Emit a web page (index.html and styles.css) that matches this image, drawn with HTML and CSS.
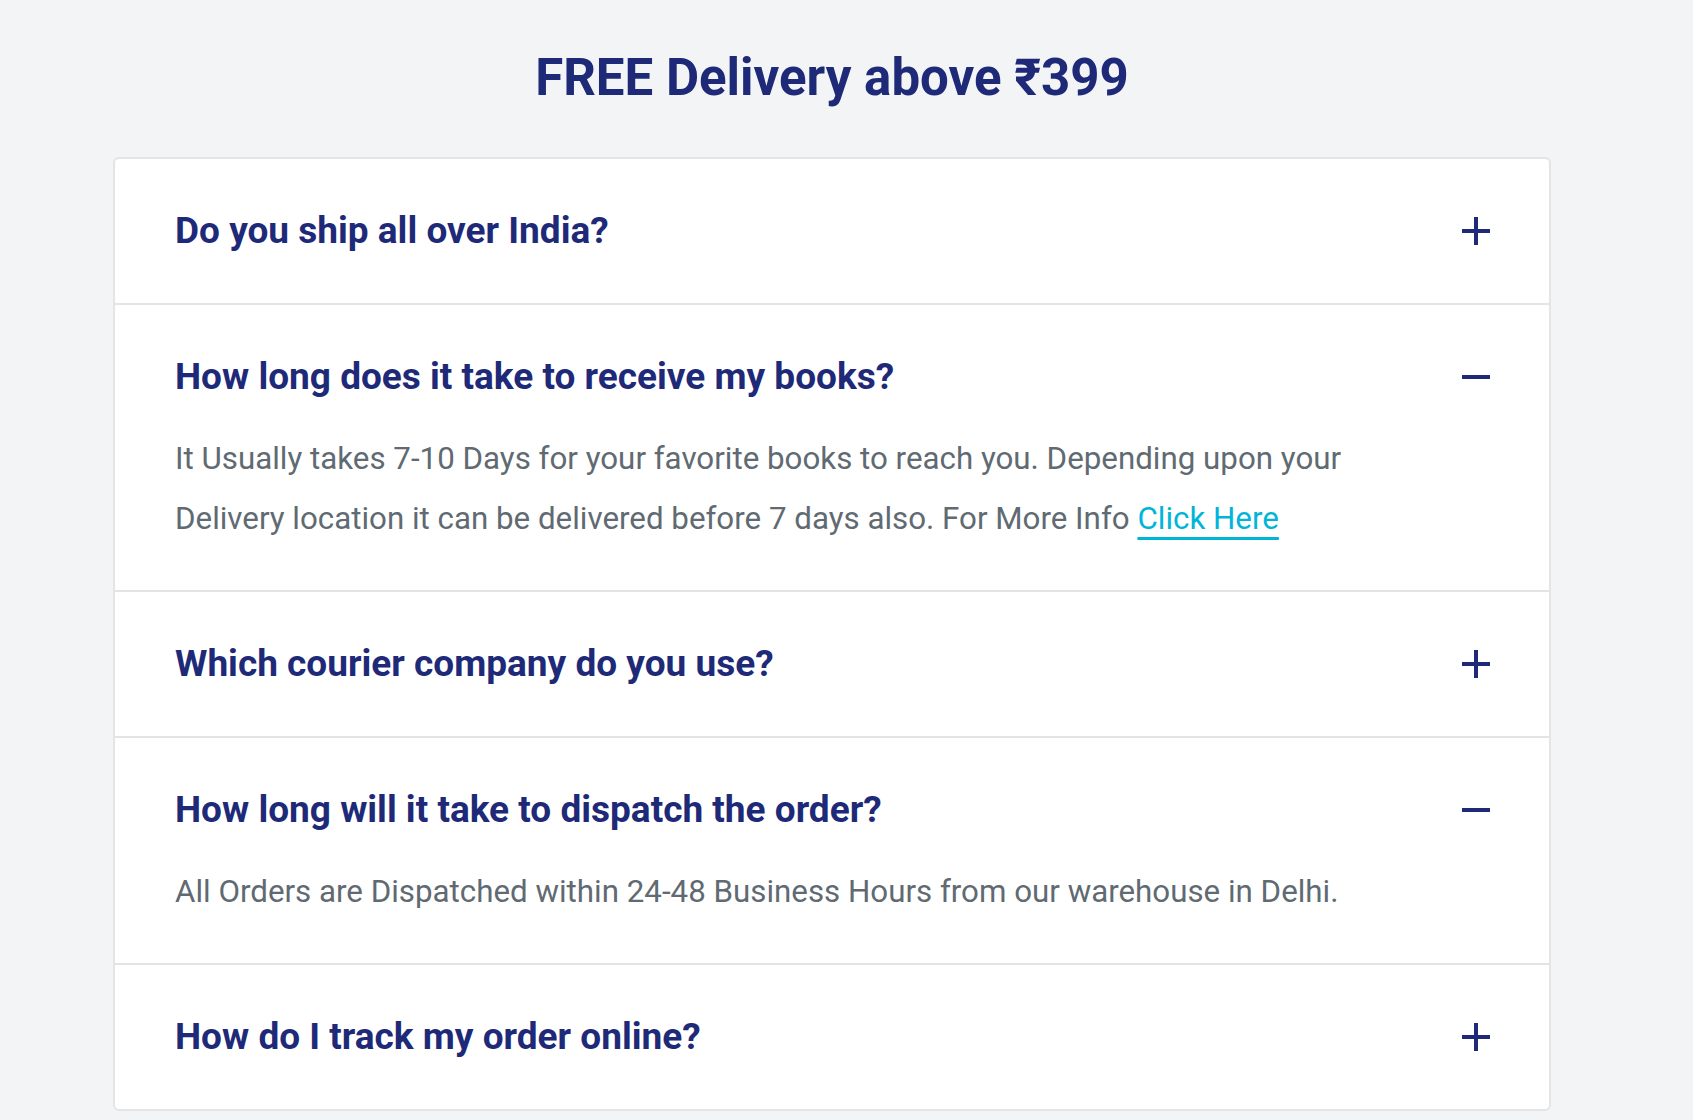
FILE: index.html
```html
<!DOCTYPE html>
<html lang="en">
<head>
  <meta charset="UTF-8">
  <meta name="viewport" content="width=device-width, initial-scale=1.0">
  <title>Shipping FAQ</title>
  <link rel="stylesheet" href="styles.css">
</head>
<body>
  <div class="faq-wrap">
    <h1 class="faq-title">FREE Delivery above ₹399</h1>

    <div class="faq-card">
      <div class="faq-item">
        <div class="faq-q">
          <span>Do you ship all over India?</span>
          <svg class="faq-icon" viewBox="0 0 28 28"><rect x="0" y="12" width="28" height="4"/><rect class="vbar" x="12" y="0" width="4" height="28"/></svg>
        </div>
        <div class="faq-a">Yes, we deliver to all serviceable pin codes across India.</div>
      </div>

      <div class="faq-item open">
        <div class="faq-q">
          <span>How long does it take to receive my books?</span>
          <svg class="faq-icon" viewBox="0 0 28 28"><rect x="0" y="12" width="28" height="4"/><rect class="vbar" x="12" y="0" width="4" height="28"/></svg>
        </div>
        <div class="faq-a">It Usually takes 7-10 Days for your favorite books to reach you. Depending upon your Delivery location it can be delivered before 7 days also. For More Info <a href="#">Click Here</a></div>
      </div>

      <div class="faq-item">
        <div class="faq-q">
          <span>Which courier company do you use?</span>
          <svg class="faq-icon" viewBox="0 0 28 28"><rect x="0" y="12" width="28" height="4"/><rect class="vbar" x="12" y="0" width="4" height="28"/></svg>
        </div>
        <div class="faq-a">We work with trusted courier partners across the country.</div>
      </div>

      <div class="faq-item open">
        <div class="faq-q">
          <span>How long will it take to dispatch the order?</span>
          <svg class="faq-icon" viewBox="0 0 28 28"><rect x="0" y="12" width="28" height="4"/><rect class="vbar" x="12" y="0" width="4" height="28"/></svg>
        </div>
        <div class="faq-a">All Orders are Dispatched within 24-48 Business Hours from our warehouse in Delhi.</div>
      </div>

      <div class="faq-item">
        <div class="faq-q">
          <span>How do I track my order online?</span>
          <svg class="faq-icon" viewBox="0 0 28 28"><rect x="0" y="12" width="28" height="4"/><rect class="vbar" x="12" y="0" width="4" height="28"/></svg>
        </div>
        <div class="faq-a">A tracking link is sent to you by SMS and email once your order ships.</div>
      </div>
    </div>
  </div>

  <script>
    document.querySelectorAll('.faq-q').forEach(q => {
      q.addEventListener('click', () => q.parentElement.classList.toggle('open'));
    });
  </script>
</body>
</html>
```

FILE: styles.css
```css
body {
  margin: 0;
  background-color: #f3f4f6;
  font-family: Roboto, "Liberation Sans", Arial, sans-serif;
}
.faq-wrap {
  width: 1438px;
  margin-left: 113px;
  padding-top: 47px;
}
.faq-title {
  margin: 0 0 49px 0;
  font-size: 51px;
  line-height: 1.2;
  font-weight: 700;
  text-align: center;
  color: #1e2a78;
}
.faq-card {
  background-color: #fff;
  border: 2px solid #e4e4e4;
  border-radius: 6px;
}
.faq-item {
  padding: 0 59px 0 60px;
  border-top: 2px solid #e4e4e4;
}
.faq-item:first-child {
  border-top: none;
}
.faq-q {
  display: flex;
  align-items: center;
  justify-content: space-between;
  padding: 54px 0;
  font-size: 37px;
  line-height: 36px;
  font-weight: 700;
  color: #1e2a78;
  cursor: pointer;
}
.faq-icon {
  width: 28px;
  height: 28px;
  fill: #1e2a78;
  flex-shrink: 0;
}
.faq-a {
  display: none;
  max-width: 1220px;
  padding-bottom: 41px;
  font-size: 31.3px;
  line-height: 60px;
  color: #5f6a72;
}
.faq-a a {
  color: #00b5d8;
  text-decoration: underline;
  text-decoration-thickness: 3px;
  text-underline-offset: 8px;
}
.faq-item.open .faq-q {
  padding-bottom: 34px;
}
.faq-item.open .faq-a {
  display: block;
}
.faq-item.open .vbar {
  display: none;
}
```
